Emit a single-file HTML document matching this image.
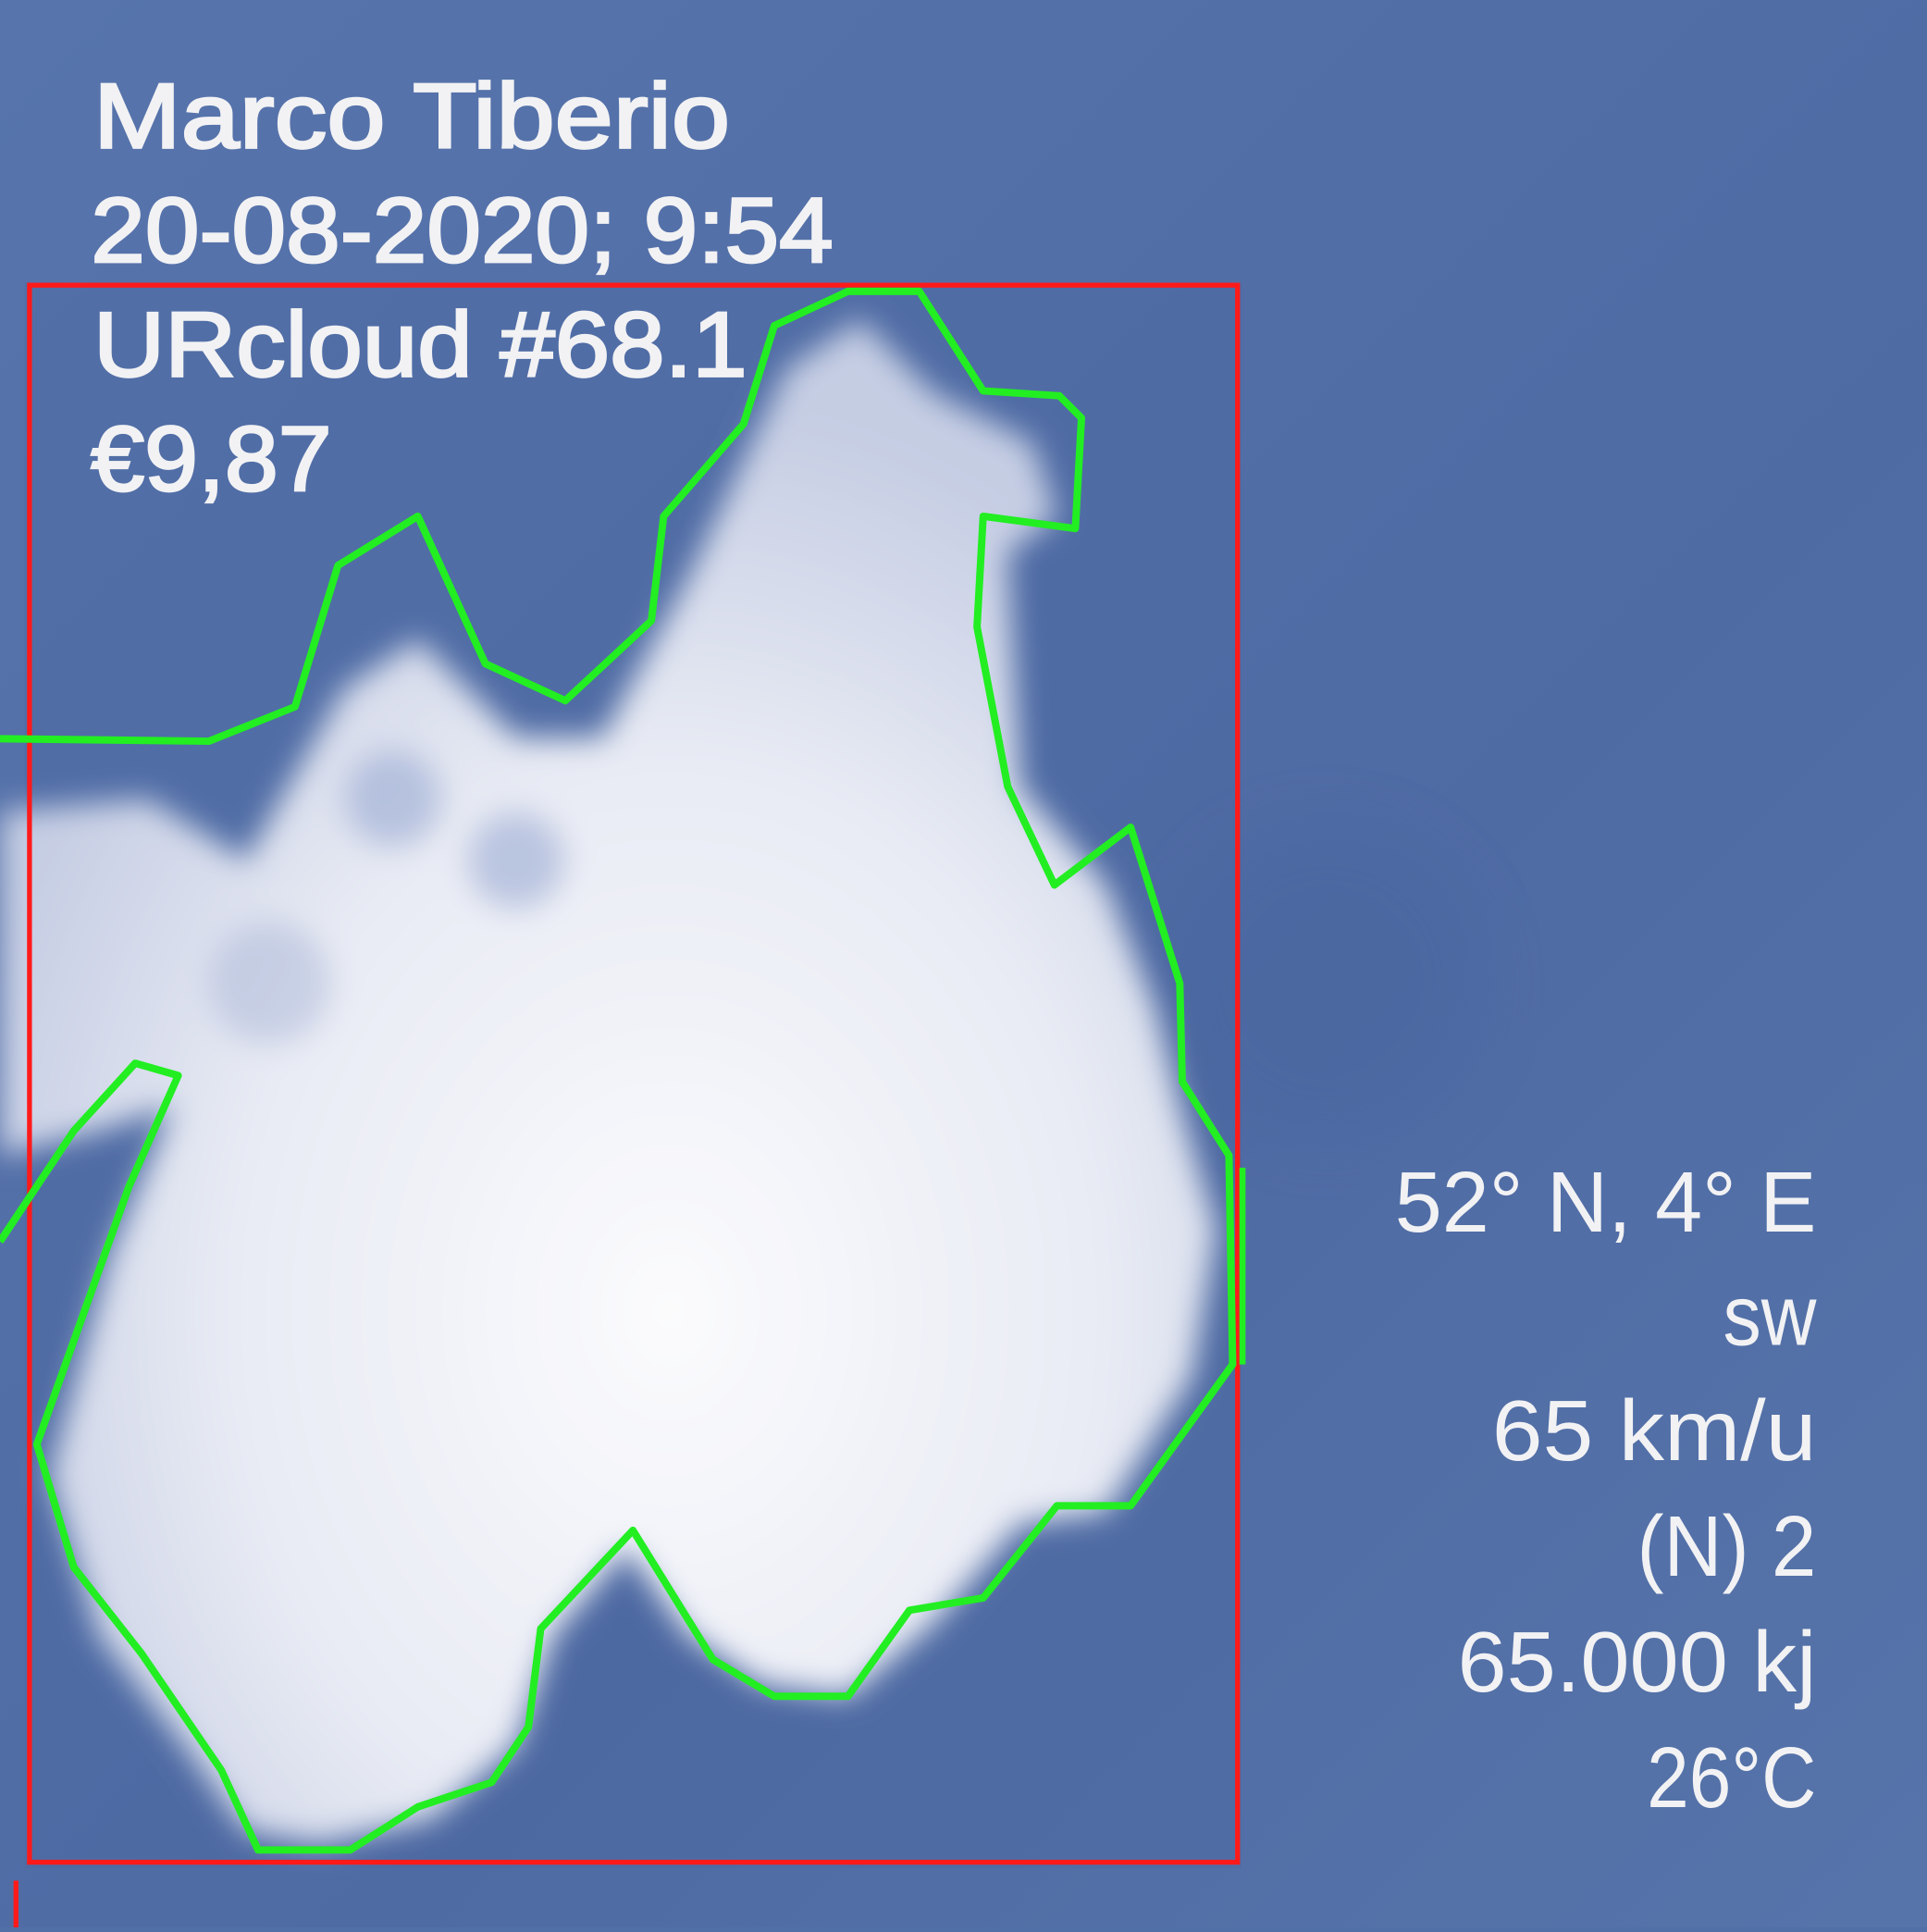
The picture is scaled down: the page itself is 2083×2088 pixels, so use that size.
<!DOCTYPE html>
<html><head><style>html,body{margin:0;padding:0;background:#5270a8;overflow:hidden}</style></head>
<body>
<svg width="2083" height="2083" viewBox="0 0 1568 1568" xmlns="http://www.w3.org/2000/svg">
<defs>
<linearGradient id="bg" x1="0" y1="0" x2="1" y2="1">
<stop offset="0" stop-color="#5774ac"/><stop offset="0.6" stop-color="#4f6ba4"/><stop offset="1" stop-color="#5674aa"/>
</linearGradient>
<radialGradient id="cl" cx="0.55" cy="0.65" r="0.6">
<stop offset="0" stop-color="#fbfbfd"/><stop offset="0.6" stop-color="#e8ebf4"/><stop offset="1" stop-color="#c5cde3"/>
</radialGradient>
<filter id="b" x="-20%" y="-20%" width="140%" height="140%"><feGaussianBlur stdDeviation="12"/></filter>
<filter id="b2" x="-50%" y="-50%" width="200%" height="200%"><feGaussianBlur stdDeviation="22"/></filter>
</defs>
<rect width="1568" height="1568" fill="url(#bg)"/>
<rect x="20" y="230" width="990" height="1290" fill="#4a66a0" opacity="0.35"/>
<circle cx="1080" cy="800" r="130" fill="#4a66a0" opacity="0.5" filter="url(#b2)"/>
<g filter="url(#b)">
<path fill="url(#cl)" d="M0 660 L120 650 L200 700 L280 560 L340 520 L420 600 L490 600 L560 470 L640 300 L700 260 L760 320 L840 360 L860 420 L820 450 L830 640 L900 720 L940 820 L960 900 L990 1000 L970 1120 L900 1230 L830 1240 L760 1320 L690 1380 L620 1370 L560 1330 L510 1260 L450 1330 L420 1420 L350 1480 L260 1500 L200 1490 L150 1420 L80 1330 L40 1200 L90 1020 L140 900 L80 920 L0 940 Z"/>
<circle cx="420" cy="700" r="40" fill="#8a9ecb" opacity="0.5"/>
<circle cx="220" cy="800" r="50" fill="#9aaad0" opacity="0.4"/>
<circle cx="320" cy="650" r="40" fill="#8a9ecb" opacity="0.5"/>
</g>
<rect x="24" y="232" width="983" height="1283" fill="none" stroke="#ff1a1a" stroke-width="4"/>
<rect x="11" y="1530" width="4" height="38" fill="#ff1a1a"/>
<path fill="none" stroke="#22ee22" stroke-width="6" stroke-linejoin="round" d="M0 601 L170 603 L240 575 L275 460 L340 420 L395 540 L460 570 L530 505 L540 420 L605 345 L630 265 L690 237 L748 237 L800 318 L862 322 L880 340 L875 430 L800 420 L795 510 L820 640 L858 720 L920 673 L960 800 L962 880 L1000 940 L1003 1110 L920 1225 L860 1225 L800 1300 L740 1310 L690 1380 L630 1380 L580 1350 L515 1245 L440 1325 L430 1405 L400 1450 L340 1470 L285 1505 L210 1505 L180 1440 L115 1345 L60 1275 L30 1175 L105 965 L145 875 L110 865 L60 920 L0 1010"/>
<path fill="none" stroke="#22ee22" stroke-width="5" d="M1011 950 L1011 1110"/>
<g font-family="Liberation Sans, sans-serif" fill="#f2f2f4" stroke="#f2f2f4" stroke-width="2" font-size="75">
<text x="76" y="120" textLength="518" lengthAdjust="spacingAndGlyphs">Marco Tiberio</text>
<text x="74" y="213" textLength="604" lengthAdjust="spacingAndGlyphs">20-08-2020; 9:54</text>
<text x="76" y="306" textLength="532" lengthAdjust="spacingAndGlyphs">URcloud #68.1</text>
<text x="74" y="399" textLength="196" lengthAdjust="spacingAndGlyphs">€9,87</text>
</g>
<g font-family="Liberation Sans, sans-serif" fill="#f2f2f4" font-size="70" text-anchor="end">
<text x="1478" y="1002" textLength="343" lengthAdjust="spacingAndGlyphs">52° N, 4° E</text>
<text x="1478" y="1094" textLength="76" lengthAdjust="spacingAndGlyphs">sw</text>
<text x="1478" y="1188" textLength="264" lengthAdjust="spacingAndGlyphs">65 km/u</text>
<text x="1478" y="1282" textLength="146" lengthAdjust="spacingAndGlyphs">(N) 2</text>
<text x="1478" y="1376" textLength="292" lengthAdjust="spacingAndGlyphs">65.000 kj</text>
<text x="1478" y="1470" textLength="138" lengthAdjust="spacingAndGlyphs">26°C</text>
</g>
</svg>
</body></html>
